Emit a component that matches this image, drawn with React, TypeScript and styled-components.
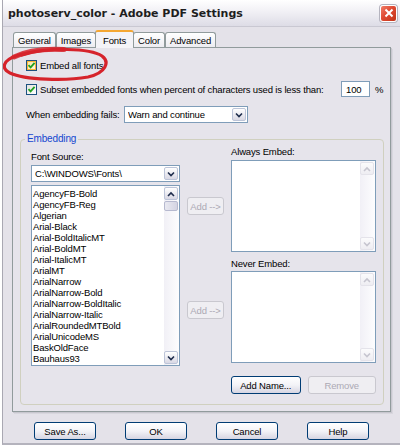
import React from 'react';
import styled, { createGlobalStyle, css } from 'styled-components';

const GlobalStyle = createGlobalStyle`
  html, body {
    margin: 0;
    padding: 0;
    background: #ffffff;
  }
  body {
    font-family: 'Liberation Sans', Arial, sans-serif;
    font-size: 9.5px;
    letter-spacing: -0.15px;
    color: #000;
  }
  * {
    box-sizing: border-box;
  }
`;

const FONT_LIST = [
  'AgencyFB-Bold',
  'AgencyFB-Reg',
  'Algerian',
  'Arial-Black',
  'Arial-BoldItalicMT',
  'Arial-BoldMT',
  'Arial-ItalicMT',
  'ArialMT',
  'ArialNarrow',
  'ArialNarrow-Bold',
  'ArialNarrow-BoldItalic',
  'ArialNarrow-Italic',
  'ArialRoundedMTBold',
  'ArialUnicodeMS',
  'BaskOldFace',
  'Bauhaus93',
];

const TABS = ['General', 'Images', 'Fonts', 'Color', 'Advanced'];

const Window = styled.div`
  position: relative;
  width: 398px;
  height: 445px;
  margin-left: 2px;
  border-left: 1px solid #a9a8b2;
  border-bottom: 2px solid #b4b3bd;
  background: #e4e2e9;
  display: flex;
  flex-direction: column;
  overflow: hidden;
`;

const TitleBar = styled.div`
  height: 27px;
  display: flex;
  align-items: center;
  padding: 0 3px 0 5px;
  background: linear-gradient(#ffffff 0%, #f1f0f5 45%, #dddce6 100%);
  border-bottom: 1px solid #c9c8d2;
`;

const Title = styled.div`
  flex: 1;
  font-family: 'DejaVu Sans', Verdana, sans-serif;
  font-weight: bold;
  font-size: 11px;
  letter-spacing: 0;
  color: #1e1e1e;
`;

const CloseButton = styled.div`
  width: 17px;
  height: 17px;
  border: 1px solid #fff;
  border-radius: 3px;
  background: linear-gradient(135deg, #f07e6a 0%, #df4a33 45%, #c23418 100%);
  box-shadow: 0 0 0 1px #b5b4bf;
  display: flex;
  align-items: center;
  justify-content: center;
`;

const Body = styled.div`
  flex: 1;
  display: flex;
  flex-direction: column;
  padding: 0 0 0 9px;
`;

const TabRow = styled.div`
  display: flex;
  align-items: flex-end;
  height: 17px;
  margin-top: 4px;
  margin-bottom: -1px;
  padding-left: 1px;
`;

const Tab = styled.div<{ $active?: boolean }>`
  height: 16px;
  padding: 0 4px;
  margin-right: 0;
  display: flex;
  align-items: center;
  border: 1px solid #919b9c;
  border-bottom: none;
  border-radius: 3px 3px 0 0;
  background: linear-gradient(#ffffff, #ecebf0);
  ${({ $active }) =>
    $active &&
    css`
      position: relative;
      z-index: 1;
      height: 18px;
      padding: 0 7px;
      margin: 0 -1px 0 -1px;
      border-top: 2px solid #f5a732;
      background: #f4f3f7;
    `}
`;

const Panel = styled.div`
  width: 379px;
  height: 365px;
  border: 1px solid #919b9c;
  box-shadow: 1px 1px 0 #c8c7cf, 2px 2px 0 #d8d7de;
  background: #e6e4eb;
  padding: 9px 6px 0 7px;
  display: flex;
  flex-direction: column;
`;

const OptionRow = styled.div`
  display: flex;
  align-items: center;
  height: 16px;
  padding-left: 6px;
  padding-right: 2px;
`;

const CheckBox = styled.span<{ $hot?: boolean }>`
  width: 11px;
  height: 11px;
  flex: none;
  border: 1px solid #1c5180;
  background: linear-gradient(135deg, #e3e3dd, #ffffff);
  display: flex;
  align-items: center;
  justify-content: center;
  margin-right: 3px;
  ${({ $hot }) =>
    $hot &&
    css`
      box-shadow: inset 0 0 0 1px #f8b636;
      background: linear-gradient(135deg, #fde4a3, #fff7e0);
    `}
`;

const Label = styled.span<{ $width?: number }>`
  white-space: nowrap;
  ${({ $width }) => $width && `width: ${$width}px; flex: none;`}
`;

const NumberField = styled.div`
  margin-left: auto;
  width: 29px;
  height: 16px;
  border: 1px solid #7f9db9;
  background: #fff;
  padding-left: 4px;
  display: flex;
  align-items: center;
`;

const Percent = styled.span`
  margin-left: 5px;
  width: 7px;
`;

const ComboBox = styled.div<{ $width: number }>`
  width: ${({ $width }) => $width}px;
  height: 17px;
  border: 1px solid #7f9db9;
  background: #fff;
  display: flex;
  align-items: center;
  padding: 1px 1px 1px 3px;
`;

const ComboText = styled.span`
  flex: 1;
  white-space: nowrap;
  overflow: hidden;
`;

const ArrowButton = styled.span<{ $disabled?: boolean }>`
  width: 14px;
  height: 13px;
  flex: none;
  border: 1px solid #bcc4d8;
  border-radius: 2px;
  background: linear-gradient(#ffffff, #d9d8e4);
  display: flex;
  align-items: center;
  justify-content: center;
  color: #1e2c4c;
  ${({ $disabled }) =>
    $disabled &&
    css`
      border-color: #e4e3ea;
      background: linear-gradient(#fbfbfc, #eeedf2);
      color: #c6c5cf;
    `}
`;

const GroupBox = styled.fieldset`
  margin: 10px 0 0;
  padding: 0 6px 10px 10px;
  border: 1px solid #d0d0bf;
  border-radius: 4px;
  min-width: 0;
`;

const Legend = styled.legend`
  color: #1547d0;
  font-size: 10px;
  padding: 0 2px;
  margin-left: -6px;
  line-height: 12px;
`;

const GroupGrid = styled.div`
  display: grid;
  grid-template-columns: 149px 37px 145px;
  column-gap: 7px;
  align-items: start;
`;

const Column = styled.div`
  display: flex;
  flex-direction: column;
`;

const FieldLabel = styled.div<{ $top: number }>`
  margin-top: ${({ $top }) => $top}px;
  height: 12px;
  line-height: 12px;
`;

const ListBox = styled.div<{ $height: number; $top: number }>`
  margin-top: ${({ $top }) => $top}px;
  height: ${({ $height }) => $height}px;
  border: 1px solid #7f9db9;
  background: #fff;
  display: flex;
`;

const ListItems = styled.div`
  flex: 1;
  padding: 2px 0 0 1px;
  overflow: hidden;
`;

const ListItem = styled.div`
  height: 11px;
  line-height: 11px;
  white-space: nowrap;
`;

const ScrollBar = styled.div`
  width: 15px;
  flex: none;
  display: flex;
  flex-direction: column;
  padding: 1px 1px 1px 0;
  background: linear-gradient(90deg, #f1f0f6, #fdfdfe);
`;

const Thumb = styled.div`
  height: 10px;
  margin-top: 1px;
  border: 1px solid #b6b9cf;
  border-radius: 2px;
  background: linear-gradient(90deg, #e9e9f1, #d4d4e2);
`;

const Spacer = styled.div`
  flex: 1;
`;

const PushButton = styled.div<{ $width: number; $top?: number; $disabled?: boolean }>`
  width: ${({ $width }) => $width}px;
  height: 18px;
  margin-top: ${({ $top }) => $top ?? 0}px;
  border: 1px solid #003c74;
  border-radius: 3px;
  background: linear-gradient(#ffffff 0%, #f3f3f7 50%, #d6d5e2 100%);
  display: flex;
  align-items: center;
  justify-content: center;
  white-space: nowrap;
  ${({ $disabled }) =>
    $disabled &&
    css`
      border-color: #c9c8cf;
      background: #efeef2;
      color: #aca9b4;
    `}
`;

const ButtonPair = styled.div`
  display: flex;
  gap: 7px;
  margin-top: 13px;
`;

const DialogButtons = styled.div`
  display: flex;
  justify-content: center;
  gap: 29px;
  margin-top: 10px;
  padding-right: 9px;
`;

const Annotation = styled.svg`
  position: absolute;
  left: -3px;
  top: 46px;
  pointer-events: none;
`;

const Chevron: React.FC<{ up?: boolean }> = ({ up }) => (
  <svg width="8" height="6" viewBox="0 0 8 6">
    <path
      d={up ? 'M1 5 L4 2 L7 5' : 'M1 1.5 L4 4.5 L7 1.5'}
      fill="none"
      stroke="currentColor"
      strokeWidth="1.6"
    />
  </svg>
);

const Check = () => (
  <svg width="9" height="9" viewBox="0 0 9 9">
    <path d="M1.5 4.2 L3.6 6.4 L7.6 1.8" fill="none" stroke="#21a121" strokeWidth="1.8" />
  </svg>
);

const App: React.FC = () => (
  <>
    <GlobalStyle />
    <Window>
      <TitleBar>
        <Title>photoserv_color - Adobe PDF Settings</Title>
        <CloseButton>
          <svg width="10" height="10" viewBox="0 0 10 10">
            <path d="M1.5 1.5 L8.5 8.5 M8.5 1.5 L1.5 8.5" stroke="#fff" strokeWidth="2" />
          </svg>
        </CloseButton>
      </TitleBar>

      <Body>
        <TabRow>
          {TABS.map((t) => (
            <Tab key={t} $active={t === 'Fonts'}>
              {t}
            </Tab>
          ))}
        </TabRow>

        <Panel>
          <OptionRow>
            <CheckBox $hot>
              <Check />
            </CheckBox>
            <Label>Embed all fonts</Label>
          </OptionRow>

          <OptionRow style={{ marginTop: 8 }}>
            <CheckBox>
              <Check />
            </CheckBox>
            <Label>Subset embedded fonts when percent of characters used is less than:</Label>
            <NumberField>100</NumberField>
            <Percent>%</Percent>
          </OptionRow>

          <OptionRow style={{ marginTop: 9, height: 17 }}>
            <Label $width={98}>When embedding fails:</Label>
            <ComboBox $width={124}>
              <ComboText>Warn and continue</ComboText>
              <ArrowButton>
                <Chevron />
              </ArrowButton>
            </ComboBox>
          </OptionRow>

          <GroupBox>
            <Legend>Embedding</Legend>
            <GroupGrid>
              <Column>
                <FieldLabel $top={6}>Font Source:</FieldLabel>
                <ComboBox $width={149} style={{ marginTop: 2 }}>
                  <ComboText>C:\WINDOWS\Fonts\</ComboText>
                  <ArrowButton>
                    <Chevron />
                  </ArrowButton>
                </ComboBox>
                <ListBox $top={3} $height={181}>
                  <ListItems>
                    {FONT_LIST.map((f) => (
                      <ListItem key={f}>{f}</ListItem>
                    ))}
                  </ListItems>
                  <ScrollBar>
                    <ArrowButton>
                      <Chevron up />
                    </ArrowButton>
                    <Thumb />
                    <Spacer />
                    <ArrowButton>
                      <Chevron />
                    </ArrowButton>
                  </ScrollBar>
                </ListBox>
              </Column>

              <Column>
                <PushButton $width={37} $top={52} $disabled>
                  Add --&gt;
                </PushButton>
                <PushButton $width={37} $top={86} $disabled>
                  Add --&gt;
                </PushButton>
              </Column>

              <Column>
                <FieldLabel $top={1}>Always Embed:</FieldLabel>
                <ListBox $top={2} $height={92}>
                  <ListItems />
                  <ScrollBar>
                    <ArrowButton $disabled>
                      <Chevron up />
                    </ArrowButton>
                    <Spacer />
                    <ArrowButton $disabled>
                      <Chevron />
                    </ArrowButton>
                  </ScrollBar>
                </ListBox>
                <FieldLabel $top={6}>Never Embed:</FieldLabel>
                <ListBox $top={1} $height={92}>
                  <ListItems />
                  <ScrollBar>
                    <ArrowButton $disabled>
                      <Chevron up />
                    </ArrowButton>
                    <Spacer />
                    <ArrowButton $disabled>
                      <Chevron />
                    </ArrowButton>
                  </ScrollBar>
                </ListBox>
                <ButtonPair>
                  <PushButton $width={70}>Add Name...</PushButton>
                  <PushButton $width={69} $disabled>
                    Remove
                  </PushButton>
                </ButtonPair>
              </Column>
            </GroupGrid>
          </GroupBox>
        </Panel>

        <DialogButtons>
          <PushButton $width={62}>Save As...</PushButton>
          <PushButton $width={62}>OK</PushButton>
          <PushButton $width={62}>Cancel</PushButton>
          <PushButton $width={62}>Help</PushButton>
        </DialogButtons>
      </Body>

      {/* hand-drawn red loop round the first option */}
      <Annotation width="112" height="40" viewBox="0 0 112 40">
        <path
          d="M22 9 C48 1, 90 2, 102 10 C110 16, 106 27, 88 31 C66 35, 25 34, 10 27 C0 22, 4 14, 16 10 C30 5, 50 3, 62 4"
          fill="none"
          stroke="#d6232b"
          strokeWidth="3.2"
          strokeLinecap="round"
        />
        <path
          d="M14 11 C26 5, 45 2.5, 64 3.5"
          fill="none"
          stroke="#d6232b"
          strokeWidth="5"
          strokeLinecap="round"
          opacity="0.85"
        />
      </Annotation>
    </Window>
  </>
);

export default App;
